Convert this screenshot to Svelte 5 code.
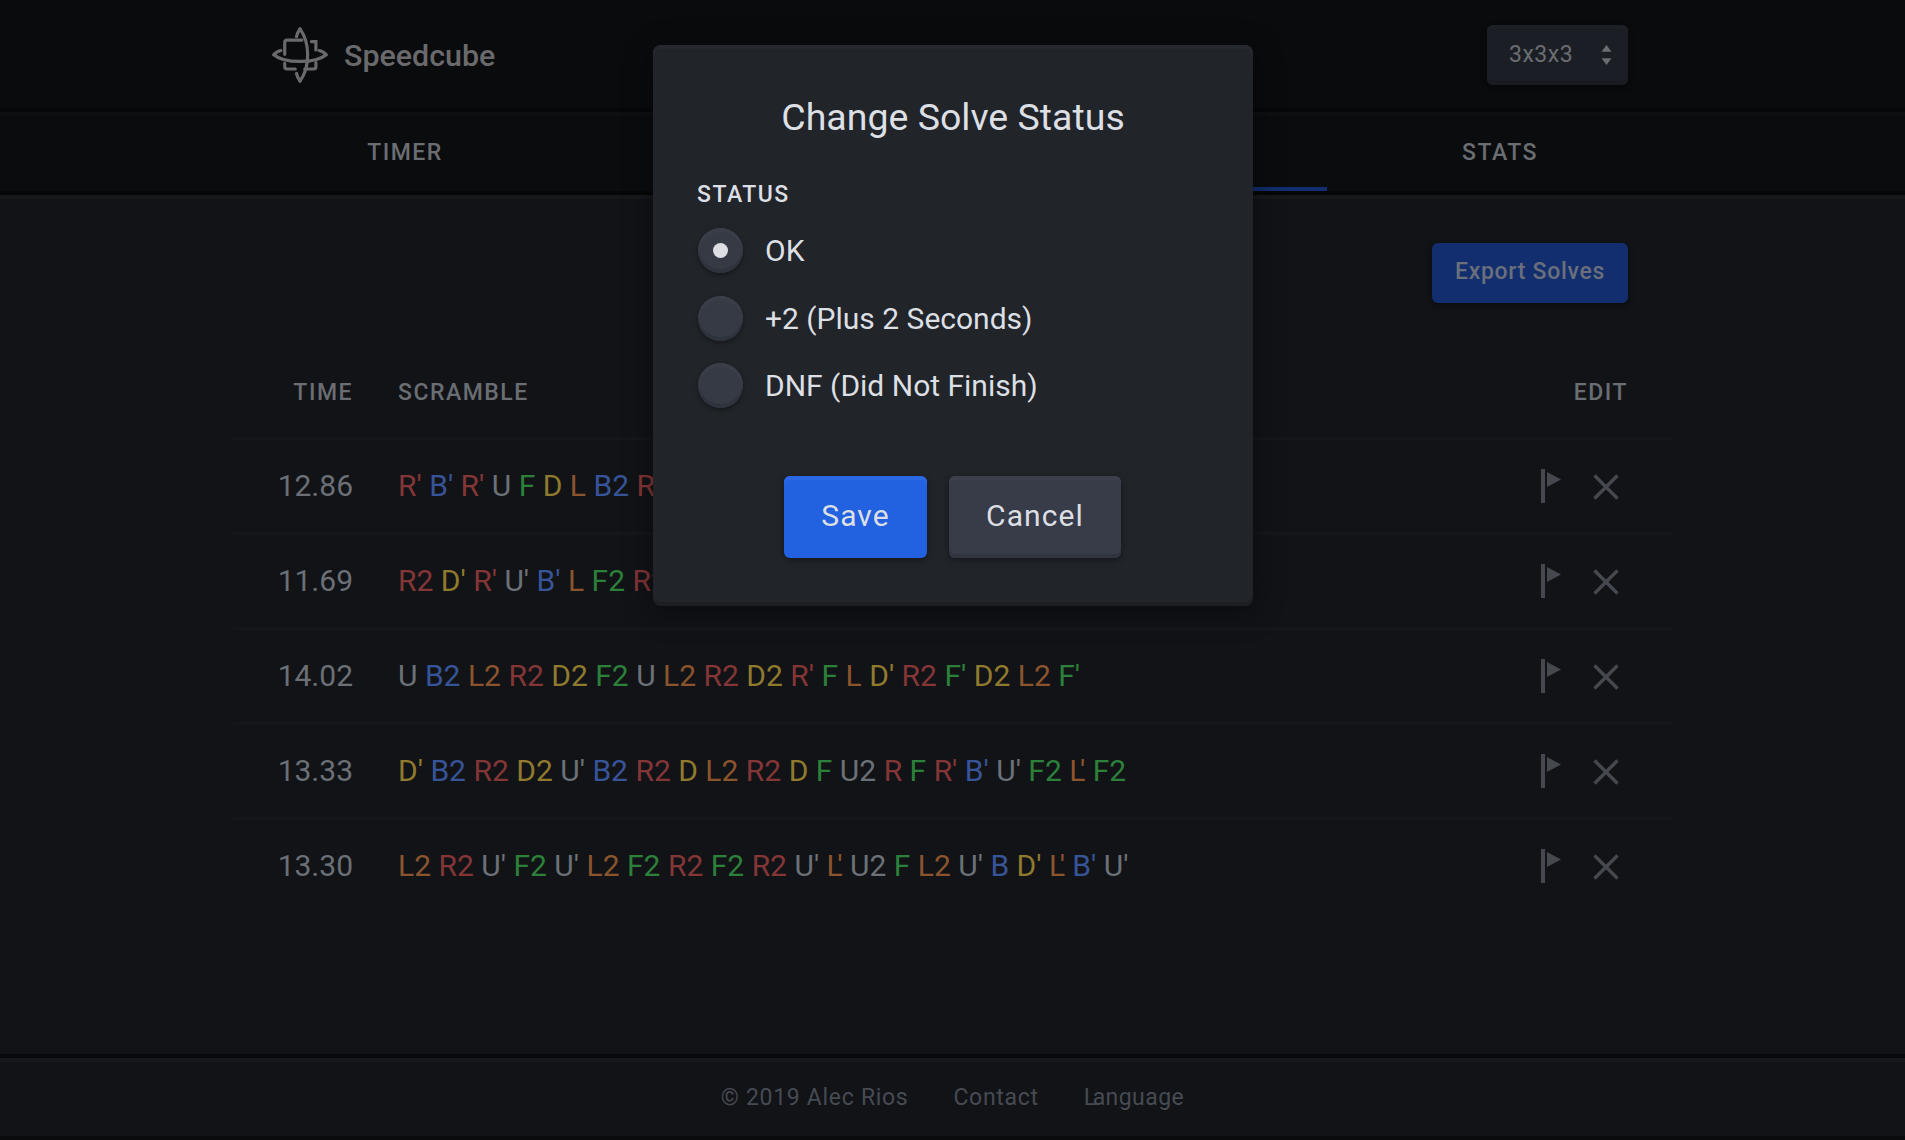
<script>
  const moveColor = { R: '#843636', B: '#385498', U: '#6c7077', F: '#2c8039', D: '#8f7a2e', L: '#8b542d' };
  const solves = [
    { time: '12.86', scramble: "R' B' R' U F D L B2 R2 U' F2 L2 D" },
    { time: '11.69', scramble: "R2 D' R' U' B' L F2 R2 U2 L' F D2" },
    { time: '14.02', scramble: "U B2 L2 R2 D2 F2 U L2 R2 D2 R' F L D' R2 F' D2 L2 F'" },
    { time: '13.33', scramble: "D' B2 R2 D2 U' B2 R2 D L2 R2 D F U2 R F R' B' U' F2 L' F2" },
    { time: '13.30', scramble: "L2 R2 U' F2 U' L2 F2 R2 F2 R2 U' L' U2 F L2 U' B D' L' B' U'" }
  ];
  const options = ['OK', '+2 (Plus 2 Seconds)', 'DNF (Did Not Finish)'];
  const tabs = ['TIMER', '', '', 'STATS'];
</script>

<div class="page">
  <header class="top">
    <div class="brand">
      <svg class="logo" viewBox="92 80 176 176" fill="none" stroke="#6a6a6c" stroke-width="10" stroke-linecap="round">
        <path d="M98 167C130 195 230 195 262 167" />
        <path d="M98 167Q104 158 120 154M262 167Q256 158 240 154" />
        <path d="M180 86C212 130 212 205 180 250" />
        <path d="M180 86Q172 96 169 110M180 250Q172 240 169 226" />
        <path d="M132 166V128Q132 121 139 121H186" />
        <path d="M132 194V205Q132 212 139 212H165M195 212H223Q230 212 230 205V192" />
        <path d="M230 152V126H216" />
      </svg>
      <span class="name">Speedcube</span>
    </div>
    <div class="select">
      <span>3x3x3</span>
      <svg class="updown" viewBox="0 0 12 22" fill="#6a6d72"><path d="M6 0l5.500 7.500H.5zM6 22L.5 14.500h11z" /></svg>
    </div>
  </header>

  <nav class="tabs">
    {#each tabs as tab, i}
      <div class="tab" class:active={i === 2}>{tab}</div>
    {/each}
  </nav>

  <main class="main">
    <div class="toolbar"><button class="export">Export Solves</button></div>
    <div class="head row-grid">
      <div class="right">TIME</div>
      <div>SCRAMBLE</div>
      <div class="right">EDIT</div>
    </div>
    {#each solves as solve}
      <div class="row row-grid">
        <div class="time right">{solve.time}</div>
        <div class="scramble">
          {#each solve.scramble.split(' ') as move}
            <span style:color={moveColor[move[0]]}>{#if move === "L'"}<span class="tight">L</span>'{:else}{move}{/if}</span>{' '}
          {/each}
        </div>
        <div class="icons">
          <svg class="flag" viewBox="0 0 20 34" fill="#45484e"><path d="M0 0h4v34H0zM6 3l14 7.500L6 18z" /></svg>
          <svg class="cross" viewBox="0 0 26 26" stroke="#45484e" stroke-width="3.400" fill="none"><path d="M1.500 1.500l23 23M24.500 1.500l-23 23" /></svg>
        </div>
      </div>
    {/each}
  </main>

  <footer class="foot">
    <span>© 2019 Alec Rios</span>
    <span>Contact</span>
    <span class="lang"><span class="kern">L</span>anguage</span>
  </footer>

  <div class="modal">
    <h2>Change Solve Status</h2>
    <div class="label">STATUS</div>
    <div class="options">
      {#each options as option, i}
        <div class="option">
          <span class="radio">{#if i === 0}<span class="dot"></span>{/if}</span>
          <span>{option}</span>
        </div>
      {/each}
    </div>
    <div class="actions">
      <button class="btn save">Save</button>
      <button class="btn cancel">Cancel</button>
    </div>
  </div>
</div>

<style>
  :global(body) {
    margin: 0;
    background: #111317;
  }
  .page {
    position: relative;
    height: 1140px;
    display: flex;
    flex-direction: column;
    font-family: Roboto, "Liberation Sans", sans-serif;
    text-rendering: optimizeLegibility;
    overflow: hidden;
    color: #6a6d72;
  }
  .top {
    box-sizing: border-box;
    height: 112px;
    flex: none;
    background: #0a0b0d;
    border-bottom: 4px solid #060708;
    padding: 2px 277px 0 272px;
    display: flex;
    align-items: center;
    justify-content: space-between;
  }
  .brand {
    display: flex;
    align-items: center;
    gap: 16px;
  }
  .logo {
    width: 56px;
    height: 56px;
    display: block;
  }
  .name {
    font-size: 30.400px;
    font-weight: 500;
    color: #6a6a6c;
  }
  .select {
    box-sizing: border-box;
    width: 141px;
    height: 60px;
    background: #1c1e25;
    border-radius: 6px;
    box-shadow: inset 0 4px 0 #1e2027, inset 0 -4px 0 #191b21, 0 2px 6px rgba(0, 0, 0, 0.4);
    display: flex;
    align-items: center;
    justify-content: space-between;
    padding: 0 16px 2px 22px;
    font-size: 23px;
    letter-spacing: 0.5px;
    color: #6a6d72;
  }
  .updown {
    width: 11px;
    height: 20px;
    margin-top: 2px;
  }
  .tabs {
    box-sizing: border-box;
    flex: none;
    height: 83px;
    background: #0b0c0e;
    border-top: 4px solid #0e0f12;
    border-bottom: 4px solid #060708;
    display: grid;
    grid-template-columns: 344px 375px 375px 346px;
    padding-left: 233px;
  }
  .tab {
    display: flex;
    align-items: center;
    justify-content: center;
    font-size: 23px;
    font-weight: 500;
    letter-spacing: 1.500px;
    color: #6a6d72;
    padding-bottom: 2px;
  }
  .tab.active {
    box-shadow: inset 0 -4px 0 #132e6e;
  }
  .main {
    flex: 1;
    border-top: 4px solid #16181c;
    padding: 44px 277px 0 233px;
    background: #111317;
  }
  .toolbar {
    display: flex;
    justify-content: flex-end;
  }
  .export {
    width: 196px;
    height: 60px;
    border: 0;
    border-radius: 6px;
    background: #132e6e;
    box-shadow: 0 2px 6px rgba(0, 0, 0, 0.4);
    color: #6a6f7c;
    font: 500 23px Roboto, sans-serif;
    letter-spacing: 0.7px;
    padding: 0 0 3px;
  }
  .row-grid {
    display: grid;
    grid-template-columns: 120px 1fr 90px;
    column-gap: 45px;
    align-items: center;
  }
  .right {
    text-align: right;
  }
  .head {
    box-sizing: border-box;
    height: 134px;
    font-size: 23px;
    font-weight: 500;
    letter-spacing: 1.500px;
    color: #6a6d72;
    padding-top: 44px;
  }
  .row {
    box-sizing: border-box;
    height: 95px;
    border-top: 3px solid #15171b;
    margin-right: -44px;
    padding: 0 44px 2px 0;
    font-size: 30px;
  }
  .time {
    color: #6c6f75;
  }
  .scramble {
    white-space: nowrap;
  }
  .tight {
    letter-spacing: -5.500px;
  }
  .lang {
    letter-spacing: 0.45px;
  }
  .kern {
    letter-spacing: -3.500px;
  }
  .icons {
    display: flex;
    align-items: center;
    justify-content: flex-end;
    gap: 32px;
    padding-right: 9px;
    padding-top: 3px;
  }
  .flag {
    width: 20px;
    height: 34px;
    margin-top: -1px;
  }
  .cross {
    width: 26px;
    height: 26px;
  }
  .foot {
    box-sizing: border-box;
    flex: none;
    height: 86px;
    border-top: 4px solid #08090b;
    box-shadow: inset 0 4px 0 #16181c;
    border-bottom: 4px solid #0a0b0d;
    background: #111317;
    display: flex;
    align-items: center;
    justify-content: center;
    gap: 45px;
    font-size: 23px;
    letter-spacing: 0.7px;
    color: #474a52;
    padding-top: 1px;
  }
  .modal {
    position: absolute;
    left: 653px;
    top: 45px;
    box-sizing: border-box;
    width: 600px;
    height: 561px;
    background: #212429;
    border-radius: 8px;
    box-shadow: inset 0 4px 0 #25282d, inset 0 -4px 0 #1d1f24, 0 6px 30px rgba(0, 0, 0, 0.45);
    padding: 45px 44px 44px;
    color: #dcdfe4;
  }
  h2 {
    margin: 0;
    height: 54px;
    line-height: 54px;
    text-align: center;
    font-size: 37.500px;
    font-weight: 400;
  }
  .label {
    margin-top: 37px;
    font-size: 23px;
    font-weight: 500;
    letter-spacing: 1.500px;
    line-height: 27px;
  }
  .options {
    margin-top: 20px;
    display: flex;
    flex-direction: column;
    gap: 22.500px;
  }
  .option {
    display: flex;
    align-items: center;
    height: 45px;
    gap: 22px;
    font-size: 30px;
  }
  .radio {
    flex: none;
    width: 45px;
    height: 45px;
    margin-left: 1px;
    border-radius: 50%;
    background: #363a45;
    box-shadow: inset 0 4px 0 #3a3e49, inset 0 -4px 0 #2f333d, 0 2px 5px rgba(0, 0, 0, 0.4);
    display: flex;
    align-items: center;
    justify-content: center;
  }
  .dot {
    width: 15px;
    height: 15px;
    border-radius: 50%;
    background: #dcdee3;
  }
  .actions {
    margin-top: 68px;
    display: flex;
    justify-content: center;
    gap: 22px;
    padding-right: 2px;
  }
  .btn {
    height: 82px;
    border: 0;
    border-radius: 6px;
    font: 400 30px Roboto, sans-serif;
    letter-spacing: 1.100px;
    color: #dcdfe4;
    padding: 0 0 4px 1px;
  }
  .save {
    width: 143px;
    background: #2261e0;
    box-shadow: inset 0 4px 0 #2a68e4, 0 2px 6px rgba(0, 0, 0, 0.4);
  }
  .cancel {
    width: 172px;
    background: #383c48;
    box-shadow: inset 0 4px 0 #3c404c, inset 0 -4px 0 #30343f, 0 2px 6px rgba(0, 0, 0, 0.4);
  }
</style>
